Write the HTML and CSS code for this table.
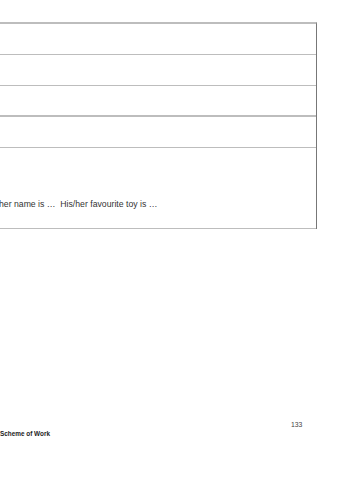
FILE: index.html
```html
<!DOCTYPE html>
<html>
<head>
<meta charset="utf-8">
<link rel="stylesheet" href="styles.css">
</head>
<body>
<div class="page">
  <div class="table">
    <div class="row r1"></div>
    <div class="row r2"></div>
    <div class="row r3 thick"></div>
    <div class="row r4"></div>
    <div class="row r5"><span class="txt">her name is …  His/her favourite toy is …</span></div>
  </div>
  <div class="footer">
    <div class="pnum">133</div>
    <div class="scheme">Scheme of Work</div>
  </div>
</div>
</body>
</html>
```
FILE: styles.css
```css
html, body {
  margin: 0;
  padding: 0;
  background: #ffffff;
}
.page {
  width: 339px;
  height: 480px;
  padding-top: 22px;
  box-sizing: border-box;
  font-family: "Liberation Sans", Arial, sans-serif;
}
.table {
  width: 317px;
  border-top: 2px solid #bdbdbd;
  border-right: 1px solid #777777;
  box-sizing: border-box;
}
.row {
  height: 30px;
  border-bottom: 1px solid #bdbdbd;
}
.r3 {
  height: 29px;
}
.row.thick {
  border-bottom: 2px solid #bdbdbd;
}
.r5 {
  padding-top: 51px;
  box-sizing: border-box;
  height: 81px;
}
.txt {
  display: block;
  font-size: 8.7px;
  line-height: 11px;
  color: #333333;
  white-space: pre;
  margin-left: -1px;
}
.footer {
  margin-top: 192px;
  display: flex;
  flex-direction: column;
}
.pnum {
  align-self: flex-start;
  margin-left: 291px;
  font-size: 6.8px;
  line-height: 8px;
  color: #444444;
}
.scheme {
  margin-top: 1px;
  font-size: 6.4px;
  line-height: 8px;
  font-weight: bold;
  color: #222222;
}
```
